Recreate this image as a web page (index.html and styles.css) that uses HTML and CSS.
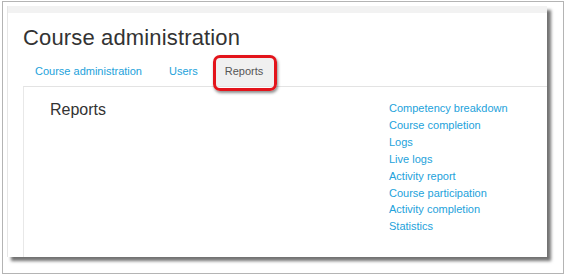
FILE: index.html
```html
<!DOCTYPE html>
<html>
<head>
<meta charset="utf-8">
<link rel="stylesheet" href="styles.css">
</head>
<body>
<div class="frame">
  <div class="card">
    <div class="card-top"></div>
    <div class="card-body">
      <h1 class="title">Course administration</h1>
      <ul class="tabs">
        <li class="tab"><a href="#">Course administration</a></li>
        <li class="tab"><a href="#">Users</a></li>
        <li class="tab active"><span>Reports</span><div class="highlight"></div></li>
      </ul>
      <div class="panel">
        <h2 class="heading">Reports</h2>
        <ul class="links">
          <li><a href="#">Competency breakdown</a></li>
          <li><a href="#">Course completion</a></li>
          <li><a href="#">Logs</a></li>
          <li><a href="#">Live logs</a></li>
          <li><a href="#">Activity report</a></li>
          <li><a href="#">Course participation</a></li>
          <li><a href="#">Activity completion</a></li>
          <li><a href="#">Statistics</a></li>
        </ul>
      </div>
    </div>
  </div>
</div>
</body>
</html>
```
FILE: styles.css
```css
* { box-sizing: border-box; }
html, body { margin: 0; padding: 0; background: #fff; }
body { font-family: Arial, "Liberation Sans", sans-serif; }
.frame {
  margin: 1px 0 0 2px;
  width: 562px;
  height: 273px;
  border: 1px solid #b4b4b4;
  background: #fff;
  padding: 4px 0 0 4px;
}
.card {
  width: 540px;
  height: 251px;
  background: #fff;
  border-left: 1px solid #e6e6e6;
  box-shadow: 4px 4px 3px rgba(0,0,0,0.55);
  display: flex;
  flex-direction: column;
}
.card-top { height: 7px; background: #f2f2f2; flex: none; }
.card-body { flex: 1; display: flex; flex-direction: column; padding: 12px 0 0 15px; }
.title {
  margin: 0;
  font-size: 22px;
  line-height: 26px;
  font-weight: normal;
  color: #333;
  letter-spacing: 0.15px;
}
.tabs {
  list-style: none;
  margin: 6px 0 0 1px;
  padding: 0;
  display: flex;
  gap: 5px;
}
.tab {
  position: relative;
  padding: 7px 11px;
  font-size: 11px;
  line-height: 15px;
  border-radius: 3px 3px 0 0;
}
.tab a { color: #23a2db; text-decoration: none; }
.tab.active { background: #f0f0f0; color: #555; padding-right: 13px; }
.highlight {
  position: absolute;
  left: -1px;
  top: -2px;
  right: -1px;
  bottom: -5px;
  border: 3px solid #e3141b;
  border-radius: 7px;
  box-shadow: 1px 2px 3px rgba(0,0,0,0.45);
}
.panel {
  flex: 1;
  border-top: 1px solid #e3e3e3;
  border-left: 1px solid #e8e8e8;
  display: flex;
  padding: 13px 0 0 26px;
}
.heading {
  margin: 0;
  width: 339px;
  font-size: 16px;
  line-height: 20px;
  font-weight: normal;
  color: #333;
}
.links {
  list-style: none;
  margin: 0;
  padding: 0;
  font-size: 11px;
  line-height: 16.9px;
}
.links a { color: #23a2db; text-decoration: none; }
```
